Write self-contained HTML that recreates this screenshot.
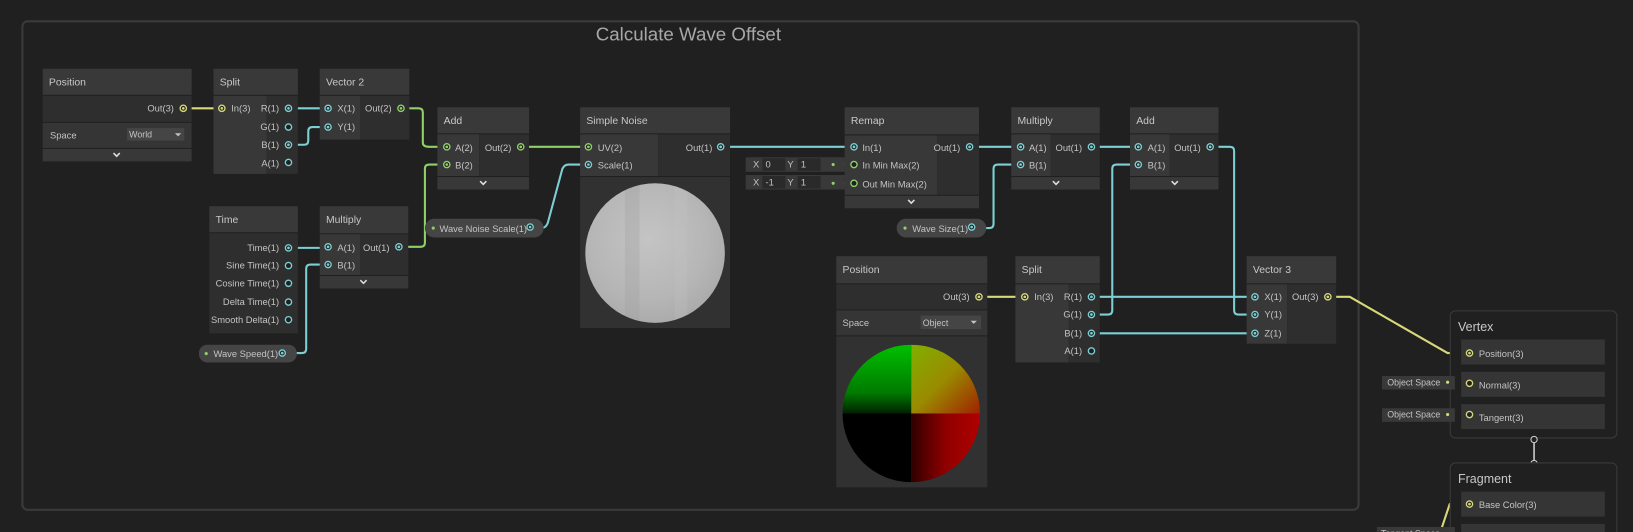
<!DOCTYPE html>
<html><head><meta charset="utf-8"><style>
html,body{margin:0;padding:0;background:#202020;width:1633px;height:532px;overflow:hidden}
svg{display:block}
text{font-family:"Liberation Sans",sans-serif;font-size:9px;fill:#c4c4c4}
.h{font-size:10px;fill:#c8c8c8}
.hd{fill:#393939}
.bd{fill:#2e2e2e}
.ic{fill:#383838}
.w{fill:none;stroke-width:2;stroke-linejoin:round}
.t{stroke:#7ccfd2}.g{stroke:#8fd06b}.y{stroke:#d8d87a}
</style></head><body>
<svg width="1633" height="532" viewBox="0 0 1568 510.8" preserveAspectRatio="none">
<defs>
<radialGradient id="ns" cx="0.45" cy="0.4" r="0.7"><stop offset="0" stop-color="#c4c4c4"/><stop offset="0.6" stop-color="#b6b6b6"/><stop offset="1" stop-color="#a6a6a6"/></radialGradient>
<linearGradient id="gtop" x1="0" y1="0" x2="0" y2="1"><stop offset="0" stop-color="#00c000"/><stop offset="0.7" stop-color="#007a00"/><stop offset="1" stop-color="#002000"/></linearGradient>
<linearGradient id="ytop" x1="0" y1="0" x2="1" y2="1"><stop offset="0" stop-color="#80b000"/><stop offset="0.5" stop-color="#9a8a00"/><stop offset="1" stop-color="#a02000"/></linearGradient>
<linearGradient id="rbot" x1="0" y1="0" x2="1" y2="0"><stop offset="0" stop-color="#300000"/><stop offset="0.5" stop-color="#900000"/><stop offset="1" stop-color="#b00000"/></linearGradient>
<clipPath id="pc"><circle cx="875" cy="397" r="66"/></clipPath>
<clipPath id="nc"><circle cx="629" cy="243" r="67"/></clipPath>
</defs>

<rect x="21.5" y="20.5" width="1283" height="469" rx="5" fill="#202020" stroke="#3a3a3a" stroke-width="2"/>
<text x="661" y="39" text-anchor="middle" style="font-size:18px;fill:#a8a8a8">Calculate Wave Offset</text>

<path class="w y" d="M176 104 H213"/>
<path class="w t" d="M277 104 H315"/>
<path class="w t" d="M277 139 H292 Q296 139 296 135 V126 Q296 122 300 122 H315"/>
<path class="w g" d="M385 104 H402 Q406 104 406 108 V137 Q406 141 412 141 H429"/>
<path class="w g" d="M383 237 H404 Q408 237 408 233 V162 Q408 158 412 158 H429"/>
<path class="w t" d="M277 238 H315"/>
<path class="w t" d="M271 339 H290 Q294 339 294 335 V258 Q294 254 298 254 H315"/>
<path class="w g" d="M500 141 H565"/>
<path class="w t" d="M509 219 H520 Q524 219 526 214 L540 162 Q542 158 546 158 H565"/>
<path class="w t" d="M692 141 H820"/>
<path class="w g" d="M800 158 H820 M800 176 H820"/>
<path class="w t" d="M931 141 H980"/>
<path class="w t" d="M940 219 H950 Q954 219 954 215 V162 Q954 158 958 158 H980"/>
<path class="w t" d="M1048 141 H1093"/>
<path class="w t" d="M1048 302 H1064 Q1068 302 1068 298 V162 Q1068 158 1072 158 H1093"/>
<path class="w t" d="M1162 141 H1181 Q1185 141 1185 145 V298 Q1185 302 1189 302 H1205"/>
<path class="w t" d="M1048 285 H1205"/>
<path class="w t" d="M1048 320 H1205"/>
<path class="w y" d="M940 285 H984"/>
<path class="w y" d="M1275 285 H1296 L1390 339 H1411"/>
<path class="w y" d="M1380 520 L1392 484 H1411"/>
<path class="w y" d="M1396 367 H1411 M1396 398 H1411"/>

<rect x="41" y="66" width="143" height="25" class="hd"/>
<text x="47" y="82" class="h">Position</text>
<rect x="41" y="92" width="143" height="25" class="bd"/>
<text x="167" y="107" text-anchor="end">Out(3)</text>
<rect x="41" y="118" width="143" height="24" fill="#353535"/>
<text x="48" y="133">Space</text>
<rect x="122" y="123" width="55" height="12" fill="#454545"/>
<text x="124" y="132" style="font-size:8.5px">World</text>
<path d="M168 128 h6 l-3 3z" fill="#c4c4c4"/>
<rect x="41" y="143" width="143" height="12" fill="#383838"/>
<path d="M109 147 l3 3 l3 -3" stroke="#ddd" stroke-width="1.5" fill="none"/>

<rect x="205" y="66" width="81" height="25" class="hd"/>
<text x="211" y="82" class="h">Split</text>
<rect x="205" y="92" width="51" height="75" class="ic"/>
<rect x="256" y="92" width="30" height="75" class="bd"/>
<text x="222" y="107">In(3)</text>
<text x="268" y="107" text-anchor="end">R(1)</text>
<text x="268" y="125" text-anchor="end">G(1)</text>
<text x="268" y="142" text-anchor="end">B(1)</text>
<text x="268" y="160" text-anchor="end">A(1)</text>

<rect x="307" y="66" width="86" height="25" class="hd"/>
<text x="313" y="82" class="h">Vector 2</text>
<rect x="307" y="92" width="39" height="42" class="ic"/>
<rect x="346" y="92" width="47" height="42" class="bd"/>
<text x="324" y="107">X(1)</text>
<text x="324" y="125">Y(1)</text>
<text x="376" y="107" text-anchor="end">Out(2)</text>

<rect x="420" y="103" width="88" height="25" class="hd"/>
<text x="426" y="119" class="h">Add</text>
<rect x="420" y="129" width="40" height="40" class="ic"/>
<rect x="460" y="129" width="48" height="40" class="bd"/>
<text x="437" y="145">A(2)</text>
<text x="437" y="162">B(2)</text>
<text x="491" y="145" text-anchor="end">Out(2)</text>
<rect x="420" y="170" width="88" height="12" fill="#383838"/>
<path d="M461 174 l3 3 l3 -3" stroke="#ddd" stroke-width="1.5" fill="none"/>

<rect x="201" y="198" width="85" height="25" class="hd"/>
<text x="207" y="214" class="h">Time</text>
<rect x="201" y="224" width="85" height="96" class="bd"/>
<text x="268" y="241" text-anchor="end">Time(1)</text>
<text x="268" y="258" text-anchor="end">Sine Time(1)</text>
<text x="268" y="275" text-anchor="end">Cosine Time(1)</text>
<text x="268" y="293" text-anchor="end">Delta Time(1)</text>
<text x="268" y="310" text-anchor="end">Smooth Delta(1)</text>

<rect x="307" y="198" width="85" height="26" class="hd"/>
<text x="313" y="214" class="h">Multiply</text>
<rect x="307" y="225" width="39" height="39" class="ic"/>
<rect x="346" y="225" width="46" height="39" class="bd"/>
<text x="324" y="241">A(1)</text>
<text x="324" y="258">B(1)</text>
<text x="374" y="241" text-anchor="end">Out(1)</text>
<rect x="307" y="265" width="85" height="12" fill="#383838"/>
<path d="M346 269 l3 3 l3 -3" stroke="#ddd" stroke-width="1.5" fill="none"/>

<rect x="191" y="331" width="94" height="17" rx="8" fill="#454545"/>
<circle cx="198" cy="339.5" r="1.5" fill="#8fd06b"/>
<text x="205" y="343">Wave Speed(1)</text>
<rect x="408" y="210" width="114" height="18" rx="9" fill="#454545"/>
<circle cx="416" cy="219" r="1.5" fill="#8fd06b"/>
<text x="422" y="223">Wave Noise Scale(1)</text>
<rect x="861" y="210" width="86" height="18" rx="9" fill="#454545"/>
<circle cx="869" cy="219" r="1.5" fill="#8fd06b"/>
<text x="876" y="223">Wave Size(1)</text>

<rect x="557" y="103" width="144" height="25" class="hd"/>
<text x="563" y="119" class="h">Simple Noise</text>
<rect x="557" y="129" width="75" height="40" class="ic"/>
<rect x="632" y="129" width="69" height="40" class="bd"/>
<text x="574" y="145">UV(2)</text>
<text x="574" y="162">Scale(1)</text>
<text x="684" y="145" text-anchor="end">Out(1)</text>
<rect x="557" y="170" width="144" height="145" fill="#313131"/>
<circle cx="629" cy="243" r="67" fill="url(#ns)"/>
<g clip-path="url(#nc)">
<rect x="600" y="170" width="14" height="150" fill="#a0a0a0" opacity="0.3"/>
<rect x="648" y="170" width="12" height="150" fill="#cacaca" opacity="0.2"/>
</g>

<rect x="716" y="151" width="95" height="14" fill="#393939"/>
<text x="723" y="161">X</text><rect x="732" y="152" width="22" height="12" fill="#2a2a2a"/><text x="735" y="161">0</text>
<text x="756" y="161">Y</text><rect x="766" y="152" width="22" height="12" fill="#2a2a2a"/><text x="769" y="161">1</text>
<circle cx="800" cy="158" r="1.5" fill="#8fd06b"/>
<rect x="716" y="168" width="95" height="14" fill="#393939"/>
<text x="723" y="178">X</text><rect x="732" y="169" width="22" height="12" fill="#2a2a2a"/><text x="735" y="178">-1</text>
<text x="756" y="178">Y</text><rect x="766" y="169" width="22" height="12" fill="#2a2a2a"/><text x="769" y="178">1</text>
<circle cx="800" cy="176" r="1.5" fill="#8fd06b"/>

<rect x="811" y="103" width="129" height="26" class="hd"/>
<text x="817" y="119" class="h">Remap</text>
<rect x="811" y="130" width="89" height="57" class="ic"/>
<rect x="900" y="130" width="40" height="57" class="bd"/>
<text x="828" y="145">In(1)</text>
<text x="828" y="162">In Min Max(2)</text>
<text x="828" y="180">Out Min Max(2)</text>
<text x="922" y="145" text-anchor="end">Out(1)</text>
<rect x="811" y="188" width="129" height="12" fill="#383838"/>
<path d="M872 192 l3 3 l3 -3" stroke="#ddd" stroke-width="1.5" fill="none"/>

<rect x="971" y="103" width="85" height="25" class="hd"/>
<text x="977" y="119" class="h">Multiply</text>
<rect x="971" y="129" width="38" height="40" class="ic"/>
<rect x="1009" y="129" width="47" height="40" class="bd"/>
<text x="988" y="145">A(1)</text>
<text x="988" y="162">B(1)</text>
<text x="1039" y="145" text-anchor="end">Out(1)</text>
<rect x="971" y="170" width="85" height="12" fill="#383838"/>
<path d="M1011 174 l3 3 l3 -3" stroke="#ddd" stroke-width="1.5" fill="none"/>

<rect x="1085" y="103" width="85" height="25" class="hd"/>
<text x="1091" y="119" class="h">Add</text>
<rect x="1085" y="129" width="38" height="40" class="ic"/>
<rect x="1123" y="129" width="47" height="40" class="bd"/>
<text x="1102" y="145">A(1)</text>
<text x="1102" y="162">B(1)</text>
<text x="1153" y="145" text-anchor="end">Out(1)</text>
<rect x="1085" y="170" width="85" height="12" fill="#383838"/>
<path d="M1125 174 l3 3 l3 -3" stroke="#ddd" stroke-width="1.5" fill="none"/>

<rect x="803" y="246" width="145" height="26" class="hd"/>
<text x="809" y="262" class="h">Position</text>
<rect x="803" y="273" width="145" height="24" class="bd"/>
<text x="931" y="288" text-anchor="end">Out(3)</text>
<rect x="803" y="298" width="145" height="24" fill="#353535"/>
<text x="809" y="313">Space</text>
<rect x="884" y="303" width="58" height="13" fill="#454545"/>
<text x="886" y="313" style="font-size:8.5px">Object</text>
<path d="M932 308 h6 l-3 3z" fill="#c4c4c4"/>
<rect x="803" y="323" width="145" height="145" fill="#313131"/>
<g clip-path="url(#pc)">
<rect x="809" y="331" width="66" height="66" fill="url(#gtop)"/>
<rect x="875" y="331" width="66" height="66" fill="url(#ytop)"/>
<rect x="809" y="397" width="66" height="66" fill="#000"/>
<rect x="875" y="397" width="66" height="66" fill="url(#rbot)"/>
</g>

<rect x="975" y="246" width="81" height="26" class="hd"/>
<text x="981" y="262" class="h">Split</text>
<rect x="975" y="273" width="51" height="75" class="ic"/>
<rect x="1026" y="273" width="30" height="75" class="bd"/>
<text x="993" y="288">In(3)</text>
<text x="1039" y="288" text-anchor="end">R(1)</text>
<text x="1039" y="305" text-anchor="end">G(1)</text>
<text x="1039" y="323" text-anchor="end">B(1)</text>
<text x="1039" y="340" text-anchor="end">A(1)</text>

<rect x="1197" y="246" width="86" height="26" class="hd"/>
<text x="1203" y="262" class="h">Vector 3</text>
<rect x="1197" y="273" width="39" height="57" class="ic"/>
<rect x="1236" y="273" width="47" height="57" class="bd"/>
<text x="1214" y="288">X(1)</text>
<text x="1214" y="305">Y(1)</text>
<text x="1214" y="323">Z(1)</text>
<text x="1266" y="288" text-anchor="end">Out(3)</text>

<rect x="1392.5" y="298.5" width="160" height="122" rx="5" fill="#202020" stroke="#3a3a3a"/>
<text x="1400" y="318" style="font-size:12px;fill:#c8c8c8">Vertex</text>
<rect x="1403" y="326" width="138" height="24" fill="#353535"/>
<text x="1420" y="343">Position(3)</text>
<rect x="1403" y="357" width="138" height="24" fill="#353535"/>
<text x="1420" y="373">Normal(3)</text>
<rect x="1403" y="388" width="138" height="24" fill="#353535"/>
<text x="1420" y="404">Tangent(3)</text>
<rect x="1327" y="361" width="70" height="13" fill="#393939"/>
<text x="1332" y="370" style="font-size:8.5px">Object Space</text>
<circle cx="1390" cy="367" r="1.5" fill="#d8d87a"/>
<rect x="1327" y="392" width="70" height="13" fill="#393939"/>
<text x="1332" y="401" style="font-size:8.5px">Object Space</text>
<circle cx="1390" cy="398" r="1.5" fill="#d8d87a"/>
<path d="M1473 425 V442" stroke="#cfcfcf" stroke-width="1.5"/>
<circle cx="1473" cy="422" r="3" fill="#202020" stroke="#cfcfcf"/>
<circle cx="1473" cy="445" r="3" fill="#202020" stroke="#cfcfcf"/>

<rect x="1392.5" y="444.5" width="160" height="100" rx="5" fill="#202020" stroke="#3a3a3a"/>
<text x="1400" y="464" style="font-size:12px;fill:#c8c8c8">Fragment</text>
<rect x="1403" y="472" width="138" height="24" fill="#353535"/>
<text x="1420" y="488">Base Color(3)</text>
<rect x="1403" y="503" width="138" height="24" fill="#353535"/>
<rect x="1322" y="506" width="75" height="13" fill="#393939"/>
<text x="1326" y="515" style="font-size:8.5px">Tangent Space</text>

<g stroke-width="1.3">
<g fill="#202020" stroke="#d8d87a"><circle cx="176" cy="104" r="3"/><circle cx="213" cy="104" r="3"/><circle cx="940" cy="285" r="3"/><circle cx="984" cy="285" r="3"/><circle cx="1275" cy="285" r="3"/><circle cx="1411" cy="339" r="3"/><circle cx="1411" cy="484" r="3"/></g>
<g fill="#d8d87a"><circle cx="176" cy="104" r="1.3"/><circle cx="213" cy="104" r="1.3"/><circle cx="940" cy="285" r="1.3"/><circle cx="984" cy="285" r="1.3"/><circle cx="1275" cy="285" r="1.3"/><circle cx="1411" cy="339" r="1.3"/><circle cx="1411" cy="484" r="1.3"/></g>
<g fill="#202020" stroke="#d8d87a"><circle cx="1411" cy="368" r="3"/><circle cx="1411" cy="398" r="3"/></g>
<g fill="#202020" stroke="#8fd06b"><circle cx="385" cy="104" r="3"/><circle cx="429" cy="141" r="3"/><circle cx="429" cy="158" r="3"/><circle cx="500" cy="141" r="3"/><circle cx="565" cy="141" r="3"/></g>
<g fill="#8fd06b"><circle cx="385" cy="104" r="1.3"/><circle cx="429" cy="141" r="1.3"/><circle cx="429" cy="158" r="1.3"/><circle cx="500" cy="141" r="1.3"/><circle cx="565" cy="141" r="1.3"/></g>
<g fill="#202020" stroke="#8fd06b"><circle cx="820" cy="158" r="3"/><circle cx="820" cy="176" r="3"/></g>
<g fill="#202020" stroke="#7ccfd2">
<circle cx="277" cy="104" r="3"/><circle cx="277" cy="122" r="3"/><circle cx="277" cy="139" r="3"/><circle cx="277" cy="156" r="3"/>
<circle cx="315" cy="104" r="3"/><circle cx="315" cy="122" r="3"/>
<circle cx="277" cy="238" r="3"/><circle cx="277" cy="255" r="3"/><circle cx="277" cy="272" r="3"/><circle cx="277" cy="290" r="3"/><circle cx="277" cy="307" r="3"/>
<circle cx="315" cy="237" r="3"/><circle cx="315" cy="254" r="3"/><circle cx="383" cy="237" r="3"/>
<circle cx="271" cy="339" r="3"/><circle cx="509" cy="218" r="3"/><circle cx="933" cy="218" r="3"/>
<circle cx="565" cy="158" r="3"/><circle cx="692" cy="141" r="3"/>
<circle cx="820" cy="141" r="3"/><circle cx="931" cy="141" r="3"/>
<circle cx="980" cy="141" r="3"/><circle cx="980" cy="158" r="3"/><circle cx="1048" cy="141" r="3"/>
<circle cx="1093" cy="141" r="3"/><circle cx="1093" cy="158" r="3"/><circle cx="1162" cy="141" r="3"/>
<circle cx="1048" cy="285" r="3"/><circle cx="1048" cy="302" r="3"/><circle cx="1048" cy="320" r="3"/><circle cx="1048" cy="337" r="3"/>
<circle cx="1205" cy="285" r="3"/><circle cx="1205" cy="302" r="3"/><circle cx="1205" cy="320" r="3"/>
</g>
<g fill="#7ccfd2">
<circle cx="277" cy="104" r="1.3"/><circle cx="277" cy="139" r="1.3"/><circle cx="315" cy="104" r="1.3"/><circle cx="315" cy="122" r="1.3"/>
<circle cx="277" cy="238" r="1.3"/><circle cx="315" cy="237" r="1.3"/><circle cx="315" cy="254" r="1.3"/><circle cx="383" cy="237" r="1.3"/>
<circle cx="271" cy="339" r="1.3"/><circle cx="509" cy="218" r="1.3"/><circle cx="933" cy="218" r="1.3"/>
<circle cx="565" cy="158" r="1.3"/><circle cx="692" cy="141" r="1.3"/><circle cx="820" cy="141" r="1.3"/><circle cx="931" cy="141" r="1.3"/>
<circle cx="980" cy="141" r="1.3"/><circle cx="980" cy="158" r="1.3"/><circle cx="1048" cy="141" r="1.3"/>
<circle cx="1093" cy="141" r="1.3"/><circle cx="1093" cy="158" r="1.3"/><circle cx="1162" cy="141" r="1.3"/>
<circle cx="1048" cy="285" r="1.3"/><circle cx="1048" cy="302" r="1.3"/><circle cx="1048" cy="320" r="1.3"/>
<circle cx="1205" cy="285" r="1.3"/><circle cx="1205" cy="302" r="1.3"/><circle cx="1205" cy="320" r="1.3"/>
</g>
</g>
</svg>
</body></html>
